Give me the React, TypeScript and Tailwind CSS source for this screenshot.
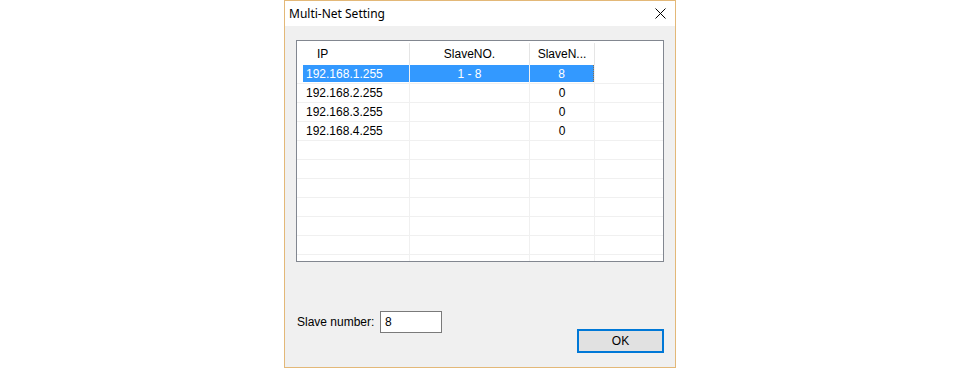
import React from "react";

interface NetRow {
  ip: string;
  slaveNo: string;
  slaveNum: string;
}

const rows: NetRow[] = [
  { ip: "192.168.1.255", slaveNo: "1 - 8", slaveNum: "8" },
  { ip: "192.168.2.255", slaveNo: "", slaveNum: "0" },
  { ip: "192.168.3.255", slaveNo: "", slaveNum: "0" },
  { ip: "192.168.4.255", slaveNo: "", slaveNum: "0" },
];

const EMPTY_ROWS = 7;

function CloseIcon() {
  return (
    <svg width="11" height="11" viewBox="0 0 11 11" className="block">
      <path d="M0.5 0.5 L10.5 10.5 M10.5 0.5 L0.5 10.5" stroke="#000" strokeWidth="1" />
    </svg>
  );
}

function ListRow({ row, selected }: { row?: NetRow; selected?: boolean }) {
  const sel = selected ? "bg-[#3399ff] text-white" : "";
  return (
    <div className="flex h-[19px] shrink-0 border-b border-[#f0f0f0]">
      <div className="w-[113px] h-full border-r border-[#f0f0f0] pl-[6px]">
        <div className={`h-[17px] pl-[3px] flex items-center ${sel}`}>{row?.ip}</div>
      </div>
      <div className="w-[120px] h-full border-r border-[#f0f0f0]">
        <div className={`h-[17px] flex items-center justify-center ${sel}`}>{row?.slaveNo}</div>
      </div>
      <div className="w-[65px] h-full border-r border-[#f0f0f0]">
        <div
          className={`h-[17px] flex items-center justify-center ${sel} ${
            selected ? "border-r border-dotted border-[#8a6f4a]" : ""
          }`}
        >
          {row?.slaveNum}
        </div>
      </div>
      <div className="flex-1" />
    </div>
  );
}

export default function App() {
  return (
    <div className="w-[960px] h-[368px] bg-white flex">
      <div
        className="ml-[284px] w-[392px] h-[368px] border border-[#e3b878] flex flex-col text-[12px] text-black"
        style={{ fontFamily: '"Liberation Sans", Arial, sans-serif' }}
      >
        {/* title bar */}
        <div className="h-[25px] shrink-0 bg-white flex items-center justify-between pl-[4px] pr-[9px]">
          <span className="text-[12px] pt-[1px]" style={{ fontFamily: '"Noto Sans", "Liberation Sans", sans-serif' }}>
            Multi-Net Setting
          </span>
          <CloseIcon />
        </div>

        {/* body */}
        <div className="flex-1 bg-[#f0f0f0] px-[11px] pt-[14px] flex flex-col">
          <div className="w-[368px] h-[222px] border border-[#828790] bg-white overflow-hidden flex flex-col">
            <div className="flex h-[24px] shrink-0 pt-[2px]">
              <div className="w-[113px] border-r border-[#e5e5e5] pl-[20px] flex items-center">IP</div>
              <div className="w-[120px] border-r border-[#e5e5e5] flex items-center justify-center">SlaveNO.</div>
              <div className="w-[65px] border-r border-[#e5e5e5] flex items-center justify-center">SlaveN...</div>
              <div className="flex-1" />
            </div>
            {rows.map((r, i) => (
              <ListRow key={r.ip} row={r} selected={i === 0} />
            ))}
            {Array.from({ length: EMPTY_ROWS }).map((_, i) => (
              <ListRow key={"e" + i} />
            ))}
          </div>

          <div className="mt-[49px] flex items-start justify-between">
            <div className="flex items-center pl-[1px]">
              <span className="w-[83px]">Slave number:</span>
              <div className="w-[62px] h-[22px] border border-[#7a7a7a] bg-white pl-[4px] flex items-center">8</div>
            </div>
            <button className="mt-[18px] w-[87px] h-[24px] border-2 border-[#0078d7] bg-[#e1e1e1] flex items-center justify-center text-[12px]">
              OK
            </button>
          </div>
        </div>
      </div>
    </div>
  );
}
